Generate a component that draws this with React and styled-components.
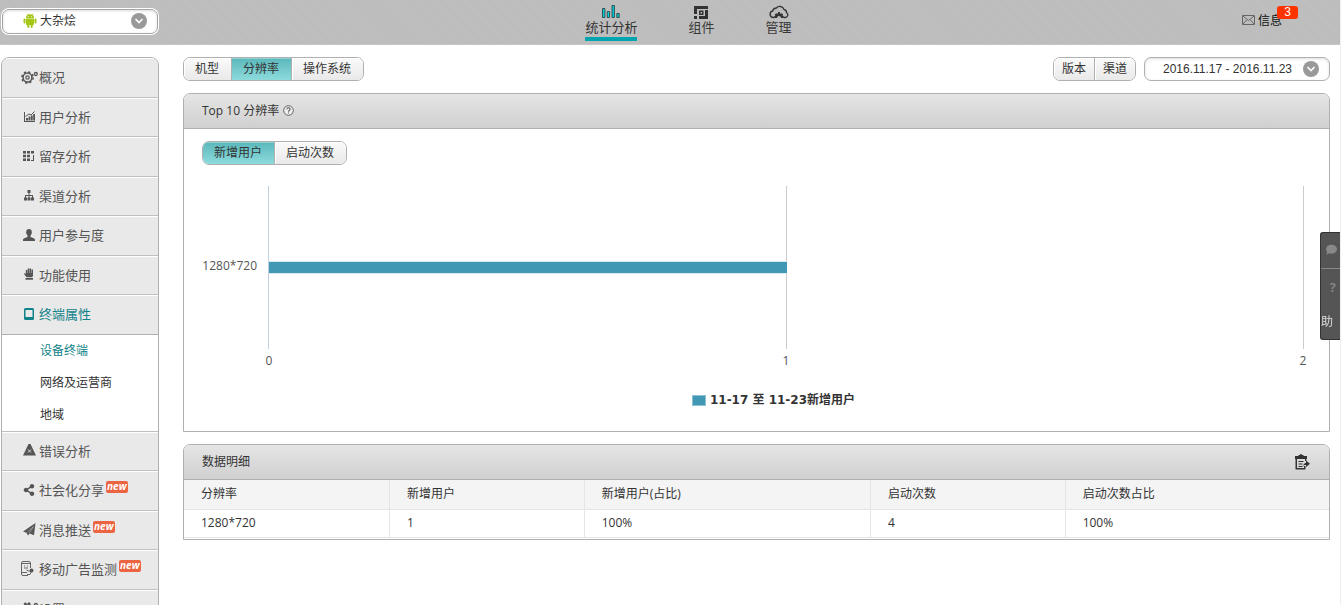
import styled, { createGlobalStyle, css } from "styled-components";
import { useState } from "react";
import { FaShareAlt, FaComment } from "react-icons/fa";

const GlobalStyle = createGlobalStyle`
    * {
        box-sizing: border-box;
    }

    body {
        margin: 0;
        background: #fff;
        color: #333;
        font-family: "Open Sans", "Noto Sans CJK SC", sans-serif;
        font-size: 12px;
    }

    button, select {
        font: inherit;
        color: inherit;
        margin: 0;
        padding: 0;
        border: 0;
        background: none;
        cursor: pointer;
    }

    a {
        color: inherit;
        text-decoration: none;
    }

    ul {
        list-style: none;
        margin: 0;
        padding: 0;
    }
`

const Page = styled.div`
    height: 100vh;
    overflow: hidden;
    border-right: 1px solid #eee;
`

const Header = styled.header`
    display: flex;
    height: 45px;
    background: repeating-linear-gradient(45deg, #bcbcbc 0 1px, #bfbfbf 1px 2px);
    border-bottom: 1px solid #c6c6c6;
`

const AppPicker = styled.label`
    display: flex;
    align-items: center;
    width: 156px;
    height: 25px;
    margin: 9px 1px 0 2px;
    padding: 0 10px 2px 20px;
    background: #fff;
    border: 1px solid #a5a5a5;
    border-radius: 7px;
    box-shadow: 0 0 0 1px #fff, inset 0 1px 3px #ddd;
`

const AppSelect = styled.select`
    flex: 1;
    min-width: 0;
    appearance: none;
    outline: none;
    line-height: 20px;
    padding-left: 3px;
`

const Nav = styled.nav`
    display: flex;
    flex: 1;
    justify-content: center;
    gap: 51px;
`

const NavLink = styled.a`
    display: flex;
    flex-direction: column;
    align-items: center;
    height: 41px;
    padding-top: 5px;
    font-size: 13px;
    line-height: 16px;
    color: ${({$active}) => $active ? "#333" : "#3a3a3a"};
    border-bottom: 4px solid ${({$active}) => $active ? "#00a5b0" : "transparent"};
`

const Messages = styled.a`
    display: flex;
    align-items: center;
    gap: 3px;
    position: relative;
    width: 122px;
    height: 40px;
    padding-left: 24px;
    color: #111;
`

const Badge = styled.span`
    position: absolute;
    top: 6px;
    left: 59px;
    width: 21px;
    height: 13px;
    border-radius: 3px;
    background: #ff3300;
    color: #fff;
    font-family: "Liberation Sans", sans-serif;
    line-height: 13px;
    text-align: center;
`

const Columns = styled.div`
    display: flex;
    align-items: flex-start;
    gap: 24px;
    padding: 12px 10px 0 1px;
`

const Sidebar = styled.ul`
    flex: none;
    width: 158px;
    border: 1px solid #b0b0b0;
    border-radius: 8px 8px 0 0;
    overflow: hidden;
`

const MenuLink = styled.a`
    display: flex;
    align-items: center;
    height: 40px;
    padding: 0 0 2px 17px;
    background: #e9e9e9;
    border-bottom: 1px solid ${({$active}) => $active ? "#b0b0b0" : "#c0c0c0"};
    box-shadow: inset 0 1px #fff;
    color: ${({$active}) => $active ? "#0f8389" : "#555"};
    font-size: 13px;
`

const MenuItem = styled.li`
    &:nth-child(even) > ${MenuLink} {
        height: 39px;
    }
`

const IconSlot = styled.span`
    display: flex;
    justify-content: center;
    width: 20px;
`

const NewTag = styled.span`
    align-self: flex-start;
    height: 12px;
    margin: 10px 0 0 2px;
    padding: 0 1px;
    border-radius: 2px;
    background: #ec6542;
    color: #fff;
    font: italic bold 10px/11px "Open Sans", sans-serif;
`

const SubMenu = styled.ul`
    background: #fff;
    border-bottom: 1px solid #c0c0c0;
`

const SubLink = styled.a`
    display: block;
    padding-left: 38px;
    line-height: 32px;
    color: ${({$active}) => $active ? "#0f8389" : "#333"};
`

const Main = styled.main`
    flex: 1;
    min-width: 0;
`

const Toolbar = styled.div`
    display: flex;
    gap: 8px;
    margin-bottom: 12px;
`

const Spacer = styled.div`
    flex: 1;
`

const Group = styled.div`
    display: inline-flex;
    height: 24px;
    border: 1px solid #b0b0b0;
    border-radius: 7px;
    overflow: hidden;
`

const GroupButton = styled.button`
    padding: ${({$compact}) => $compact ? "0 8px" : "0 12px 0 11px"};
    line-height: 22px;
    background: linear-gradient(#fafafa, #e9e9e9);
    box-shadow: inset 1px 1px #fff;

    & + & {
        border-left: 1px solid #b0b0b0;
    }

    ${({$active}) => $active && css`
        background: linear-gradient(#5ab7bb, #8ddbdc);
        box-shadow: inset 0 1px #8fd0d3;
    `}
`

const DateButton = styled.button`
    display: flex;
    align-items: center;
    justify-content: space-between;
    min-width: 186px;
    height: 24px;
    padding: 0 10px 0 18px;
    border: 1px solid #b0b0b0;
    border-radius: 7px;
    box-shadow: inset 0 1px 3px #ddd;
    font-family: "Liberation Sans", sans-serif;
`

const Card = styled.section`
    margin-bottom: 12px;
    border: 1px solid #b0b0b0;
    border-radius: 7px 7px 0 0;
    overflow: hidden;
`

const CardHeader = styled.header`
    display: flex;
    align-items: center;
    justify-content: space-between;
    height: 35px;
    padding: 0 19px 0 18px;
    background: linear-gradient(#e5e5e5, #d0d0d0);
    border-bottom: 1px solid #b0b0b0;
`

const CardTitle = styled.h2`
    display: flex;
    align-items: center;
    gap: 4px;
    margin: 0;
    padding-bottom: 2px;
    font-size: 12px;
    font-weight: normal;
`

const IconButton = styled.button`
    display: flex;
`

const CardBody = styled.div`
    padding: 12px 0 19px 18px;
`

const Chart = styled.div`
    display: grid;
    grid-template-columns: 66px 1fr;
    margin-top: 21px;
    padding-right: 25px;
    color: #555;
`

// long names lose their left end, like the axis labels do
const YLabel = styled.div`
    display: flex;
    align-items: center;
    justify-content: flex-end;
    height: 163px;
    padding: 0 11px 4px 0;
    overflow: hidden;
`

const Plot = styled.div`
    display: grid;
    grid-template-columns: 1fr 1fr;
    align-items: center;
`

const GridCell = styled.div`
    grid-row: 1;
    grid-column: ${({$column}) => $column};
    height: 163px;
    border-left: 1px solid ${({$column}) => $column === 1 ? "#c0d0e0" : "#ccc"};
    border-right: ${({$column}) => $column === 2 ? "1px solid #ccc" : "0"};
`

const BarTrack = styled.div`
    grid-row: 1;
    grid-column: 1 / 3;
    padding-left: 1px;
`

const Bar = styled.div`
    height: 11px;
    background: #4198b5;
    box-shadow: 0 1px #d9eaf0, 0 -1px #d9eaf0;
`

const Ticks = styled.div`
    grid-column: 2;
    display: flex;
    justify-content: space-between;
    margin: 0 -5px;
    line-height: 24px;
`

const Tick = styled.span`
    width: 12px;
    text-align: center;
`

const Legend = styled.div`
    display: flex;
    align-items: center;
    justify-content: center;
    gap: 4px;
    margin-top: 15px;
    padding-left: 16px;
    font: bold 12px/24px "DejaVu Sans", "Noto Sans CJK SC", sans-serif;
`

const Swatch = styled.span`
    width: 14px;
    height: 11px;
    border: 1px solid #8fc1d2;
    background: #4198b5;
`

const Table = styled.table`
    width: 100%;
    margin-bottom: 1px;
    border-collapse: separate;
    border-spacing: 0;
    table-layout: fixed;
    text-align: left;
`

const Cell = styled.td`
    height: 28px;
    padding: 0 17px 2px;
    border-right: 1px solid #e5e5e5;
    border-bottom: 1px solid #e5e5e5;
    line-height: 16px;

    &:last-child {
        border-right: 0;
    }
`

const HeadCell = styled(Cell)`
    width: ${({$width}) => $width};
    height: 30px;
    background: #f4f4f4;
    font-weight: normal;
`

const HelpDock = styled.aside`
    position: fixed;
    top: 232px;
    right: 1px;
    width: 20px;
    border: 1px solid #333;
    border-right: 0;
    border-radius: 3px 0 0 3px;
    background: #555;
    overflow: hidden;
`

const DockButton = styled.button`
    display: flex;
    flex-direction: column;
    align-items: flex-end;
    justify-content: space-around;
    width: 100%;
    height: ${({$tall}) => $tall ? "71px" : "35px"};
    padding: 0 3px 2px 0;
    color: #888;

    & + & {
        border-top: 1px solid #888;
    }
`

const DockMark = styled.span`
    margin-right: 1px;
    font-size: 13px;
    font-weight: bold;
    line-height: 20px;
`

const DockText = styled.span`
    margin-right: 4px;
    color: #ddd;
`

const Chevron = () => (
    <svg width="16" height="16" viewBox="0 0 16 16" aria-hidden="true">
        <circle cx="8" cy="8" r="8" fill="#999" />
        <path d="M4.500 6l3.500 3.500L11.500 6" fill="none" stroke="#fff" strokeWidth="1.600" />
    </svg>
)

const AndroidIcon = () => (
    <svg width="14" height="15" viewBox="0 0 14 15" fill="#a4c614" aria-hidden="true">
        <path d="M3 5a4 3.700 0 0 1 8 0zM3 5.600h8V11a1 1 0 0 1-1 1H4a1 1 0 0 1-1-1z" />
        <rect x="0.500" y="5.500" width="2" height="5" rx="1" />
        <rect x="11.500" y="5.500" width="2" height="5" rx="1" />
        <rect x="4.300" y="11" width="2" height="4" rx="1" />
        <rect x="7.700" y="11" width="2" height="4" rx="1" />
        <path d="M4 .5l1.200 1.700M10 .5L8.800 2.200" stroke="#a4c614" strokeWidth=".6" />
        <circle cx="5.300" cy="3.500" r=".5" fill="#fff" />
        <circle cx="8.700" cy="3.500" r=".5" fill="#fff" />
    </svg>
)

const StatsIcon = () => (
    <svg width="18" height="14" viewBox="0 0 18 14" fill="#00d0d8" stroke="#2c4448" strokeWidth=".9" aria-hidden="true">
        <path d="M.5 3.500h2.400v9H.5zM5.200 6.500h2.400v6H5.200zM10 .5h2.400v12H10zM14.800 8.500h2.400v4h-2.400z" />
    </svg>
)

const ComponentIcon = () => (
    <svg width="14" height="14" viewBox="0 0 14 14" fill="#333" aria-hidden="true">
        <path d="M0 1h14v3H3v5H0zM11 5h3v9H5v-3h6zM5 5.500h4.500V10H5zM0 11h3v3H0z" />
        <path d="M6.500 7H8v1.500H6.500z" fill="#bbb" />
    </svg>
)

const CloudIcon = () => (
    <svg width="20" height="14" viewBox="0 0 20 14" aria-hidden="true">
        <path d="M5 12.500H4A3.300 3.300 0 0 1 3.700 6 3.700 3.700 0 0 1 7.300 3 4.500 4.500 0 0 1 15 4.500a3 3 0 0 1 2.500 3A2.700 2.700 0 0 1 16 12.500h-1" fill="none" stroke="#333" strokeWidth="1.300" />
        <path d="M5 13l.3-2 1-.3-.4-1.500 1.400-1 1 .8L9.300 7h1.600l.6 2 1.200-.8 1.300 1-.4 1.500 1 .3.400 2h-3a2 2 0 0 0-4 0z" fill="#333" />
    </svg>
)

const MailIcon = () => (
    <svg width="13" height="10" viewBox="0 0 13 10" fill="none" stroke="#666" aria-hidden="true">
        <path d="M.5 .5h12v9H.5zM1 1l5.500 4.500L12 1M1 9l3.500-4M12 9L8.500 5" />
    </svg>
)

const GearsIcon = () => (
    <svg width="18" height="14" viewBox="0 0 18 14" fill="none" stroke="#555" aria-hidden="true">
        <circle cx="7.500" cy="7.500" r="5.600" strokeWidth="1.600" strokeDasharray="2.200 2.200" />
        <circle cx="7.500" cy="7.500" r="4.400" strokeWidth="1.500" />
        <circle cx="7.500" cy="7.500" r="1.700" strokeWidth="1.200" />
        <circle cx="15.800" cy="4" r="1.500" strokeWidth="1.300" />
    </svg>
)

const GrowthIcon = () => (
    <svg width="11" height="11" viewBox="0 0 11 11" fill="#555" aria-hidden="true">
        <path d="M0 1h1v9h10v1H0zM2 7h2v2.500H2zM4.500 5.500h2v4h-2zM7 4.500h1.700v5H7zM9.200 3H11v6.500H9.200z" />
        <path d="M1.500 5.500L5 3l2 1 3.500-3.500" fill="none" stroke="#555" />
    </svg>
)

const BlocksIcon = () => (
    <svg width="12" height="10" viewBox="0 0 12 10" fill="#555" aria-hidden="true">
        <path d="M0 0h3v2.400H0zM4 0h3v2.400H4zM8 0h3v2.400H8zM0 3.800h3v2.400H0zM4 3.800h3v2.400H4zM0 7.600h3V10H0zM4 7.600h3V10H4zM10 4h1v6H8V9h2z" />
    </svg>
)

const TreeIcon = () => (
    <svg width="10" height="11" viewBox="0 0 10 11" fill="#555" aria-hidden="true">
        <path d="M3.500 0h3v3h-3zM4.500 3h1v2h3.500v3H8V6H5.500v2h-1V6H2v2H1V5h3.500zM0 7.500h3v3H0zM3.500 7.500h3v3h-3zM7 7.500h3v3H7z" />
    </svg>
)

const UserIcon = () => (
    <svg width="12" height="12" viewBox="0 0 12 12" fill="#555" aria-hidden="true">
        <ellipse cx="6" cy="3.300" rx="2.800" ry="3.300" />
        <path d="M4.500 5.500h3V8l3.200 1.200c.8.300 1.300.8 1.300 1.800v1H0v-1c0-1 .5-1.500 1.300-1.800L4.500 8z" />
    </svg>
)

const HandIcon = () => (
    <svg width="10" height="12" viewBox="0 0 10 12" fill="#555" aria-hidden="true">
        <path d="M1.800 2h1.500v3h.4V.5h1.500V5h.4V.5h1.500V5h.4V1.500H9V8L8 9.200H2.500L0 6l.5-1L1.800 6zM1.500 10h7.500v1.800H1.500z" />
    </svg>
)

const TabletIcon = () => (
    <svg width="10" height="12" viewBox="0 0 10 12" aria-hidden="true">
        <path fillRule="evenodd" d="M1.500 0h7A1.500 1.500 0 0 1 10 1.500v9A1.500 1.500 0 0 1 8.500 12h-7A1.500 1.500 0 0 1 0 10.500v-9A1.500 1.500 0 0 1 1.500 0zM1.500 2v7h7V2z" fill="#0f8389" />
    </svg>
)

const WarningIcon = () => (
    <svg width="13" height="12" viewBox="0 0 13 12" aria-hidden="true">
        <path d="M5.500 0h2L13 11.500H0z" fill="#555" />
        <path d="M5 5.500l3 3M8 5.500l-3 3" stroke="#e9e9e9" strokeWidth=".9" />
    </svg>
)

const PlaneIcon = () => (
    <svg width="13" height="13" viewBox="0 0 13 13" aria-hidden="true">
        <path d="M12.500 0L0 8.500l3.500 1.200L5 12.500l1.500-2 4.500 1.700z" fill="#555" />
        <path d="M10.500 3.500L4.500 9M10.500 3.500l-4 6.500" stroke="#e9e9e9" strokeWidth=".4" />
    </svg>
)

const PhoneAdIcon = () => (
    <svg width="18" height="16" viewBox="0 0 18 16" fill="none" stroke="#666" aria-hidden="true">
        <path d="M10.500 7V2A1.500 1.500 0 0 0 9 .5H3A1.500 1.500 0 0 0 1.500 2v11A1.500 1.500 0 0 0 3 14.500h5M2 2.500h8M2 11.500h5M4 7h4M4 5h1M7 5h1" />
        <circle cx="11.500" cy="9.500" r="2" fill="#555" stroke="none" />
        <path d="M6.500 9l3 1.500M7 13.500h3l1.500-3" />
    </svg>
)

const HelpIcon = () => (
    <svg width="11" height="11" viewBox="0 0 11 11" fill="none" stroke="#555" aria-hidden="true">
        <circle cx="5.500" cy="5.500" r="4.800" fill="#eee" strokeWidth=".9" />
        <path d="M3.900 4.300c0-2 3.200-2 3.200 0 0 1-1.600 1.100-1.600 2.400M5.500 7.500v1" strokeWidth="1.100" />
    </svg>
)

const ExportIcon = () => (
    <svg width="16" height="16" viewBox="0 0 16 16" fill="#333" aria-hidden="true">
        <path d="M1 2h3.500V1h1.500a1 1 0 0 1 2 0h1.500v1H13v3H1zM1.500 5H3v9h7v-2h1.500v3.500h-10zM11 5h1.300v2H11zM4.500 7h5v1h-5zM4.500 9.500h4v1h-4zM4.500 12h4v1h-4z" />
        <path d="M8.500 12l2.500-3h1V6.500l4 3.200-4 3.200V11H10.500z" />
    </svg>
)

const menu = [
    {name: "概况", icon: <GearsIcon />},
    {name: "用户分析", icon: <GrowthIcon />},
    {name: "留存分析", icon: <BlocksIcon />},
    {name: "渠道分析", icon: <TreeIcon />},
    {name: "用户参与度", icon: <UserIcon />},
    {name: "功能使用", icon: <HandIcon />},
    {name: "终端属性", icon: <TabletIcon />, active: true, children: ["设备终端", "网络及运营商", "地域"]},
    {name: "错误分析", icon: <WarningIcon />},
    {name: "社会化分享", icon: <FaShareAlt size={12} />, isNew: true},
    {name: "消息推送", icon: <PlaneIcon />, isNew: true},
    {name: "移动广告监测", icon: <PhoneAdIcon />, isNew: true},
    {name: "设置", icon: <GearsIcon />},
]

const columns = [
    {title: "分辨率", width: "18%"},
    {title: "新增用户", width: "17%"},
    {title: "新增用户(占比)", width: "25%"},
    {title: "启动次数", width: "17%"},
    {title: "启动次数占比", width: "23%"},
]

const rows = [["1280*720", "1", "100%", "4", "100%"]]

const axisMax = 2

const ButtonGroup = ({items, active, onSelect, compact}) => (
    <Group>
        {items.map((item) => (
            <GroupButton
                key={item}
                type="button"
                $active={item === active}
                $compact={compact}
                onClick={() => onSelect && onSelect(item)}
            >
                {item}
            </GroupButton>
        ))}
    </Group>
)

const SideMenu = () => (
    <Sidebar>
        {menu.map((item) => (
            <MenuItem key={item.name}>
                <MenuLink href="#" $active={item.active}>
                    <IconSlot>{item.icon}</IconSlot>
                    {item.name}
                    {item.isNew && <NewTag>new</NewTag>}
                </MenuLink>
                {item.children && (
                    <SubMenu>
                        {item.children.map((child, index) => (
                            <li key={child}><SubLink href="#" $active={index === 0}>{child}</SubLink></li>
                        ))}
                    </SubMenu>
                )}
            </MenuItem>
        ))}
    </Sidebar>
)

const BarChart = ({label, value}) => (
    <Chart>
        <YLabel>{label}</YLabel>
        <Plot>
            <GridCell $column={1} />
            <GridCell $column={2} />
            <BarTrack>
                <Bar style={{width: `${value / axisMax * 100}%`}} />
            </BarTrack>
        </Plot>
        <Ticks>
            <Tick>0</Tick>
            <Tick>1</Tick>
            <Tick>2</Tick>
        </Ticks>
    </Chart>
)

const App = () => {

    const [dimension, setDimension] = useState("分辨率")
    const [metric, setMetric] = useState("新增用户")

    return (
        <Page>
            <GlobalStyle />
            <Header>
                <AppPicker>
                    <AndroidIcon />
                    <AppSelect aria-label="应用">
                        <option>大杂烩</option>
                    </AppSelect>
                    <Chevron />
                </AppPicker>
                <Nav>
                    <NavLink href="#" $active><StatsIcon />统计分析</NavLink>
                    <NavLink href="#"><ComponentIcon />组件</NavLink>
                    <NavLink href="#"><CloudIcon />管理</NavLink>
                </Nav>
                <Messages href="#">
                    <MailIcon />信息
                    <Badge>3</Badge>
                </Messages>
            </Header>
            <Columns>
                <SideMenu />
                <Main>
                    <Toolbar>
                        <ButtonGroup items={["机型", "分辨率", "操作系统"]} active={dimension} onSelect={setDimension} />
                        <Spacer />
                        <ButtonGroup items={["版本", "渠道"]} compact />
                        <DateButton type="button">2016.11.17 - 2016.11.23<Chevron /></DateButton>
                    </Toolbar>
                    <Card>
                        <CardHeader>
                            <CardTitle>Top 10 分辨率 <HelpIcon /></CardTitle>
                        </CardHeader>
                        <CardBody>
                            <ButtonGroup items={["新增用户", "启动次数"]} active={metric} onSelect={setMetric} />
                            <BarChart label="1280*720" value={1} />
                            <Legend><Swatch />11-17 至 11-23新增用户</Legend>
                        </CardBody>
                    </Card>
                    <Card>
                        <CardHeader>
                            <CardTitle>数据明细</CardTitle>
                            <IconButton type="button" aria-label="导出"><ExportIcon /></IconButton>
                        </CardHeader>
                        <Table>
                            <thead>
                                <tr>
                                    {columns.map((column) => (
                                        <HeadCell as="th" key={column.title} $width={column.width}>{column.title}</HeadCell>
                                    ))}
                                </tr>
                            </thead>
                            <tbody>
                                {rows.map((row) => (
                                    <tr key={row[0]}>
                                        {row.map((value, index) => <Cell key={index}>{value}</Cell>)}
                                    </tr>
                                ))}
                            </tbody>
                        </Table>
                    </Card>
                </Main>
            </Columns>
            <HelpDock>
                <DockButton type="button" aria-label="反馈"><FaComment size={11} /></DockButton>
                <DockButton type="button" $tall>
                    <DockMark>?</DockMark>
                    <DockText>助</DockText>
                </DockButton>
            </HelpDock>
        </Page>
    )

}

export default App;
